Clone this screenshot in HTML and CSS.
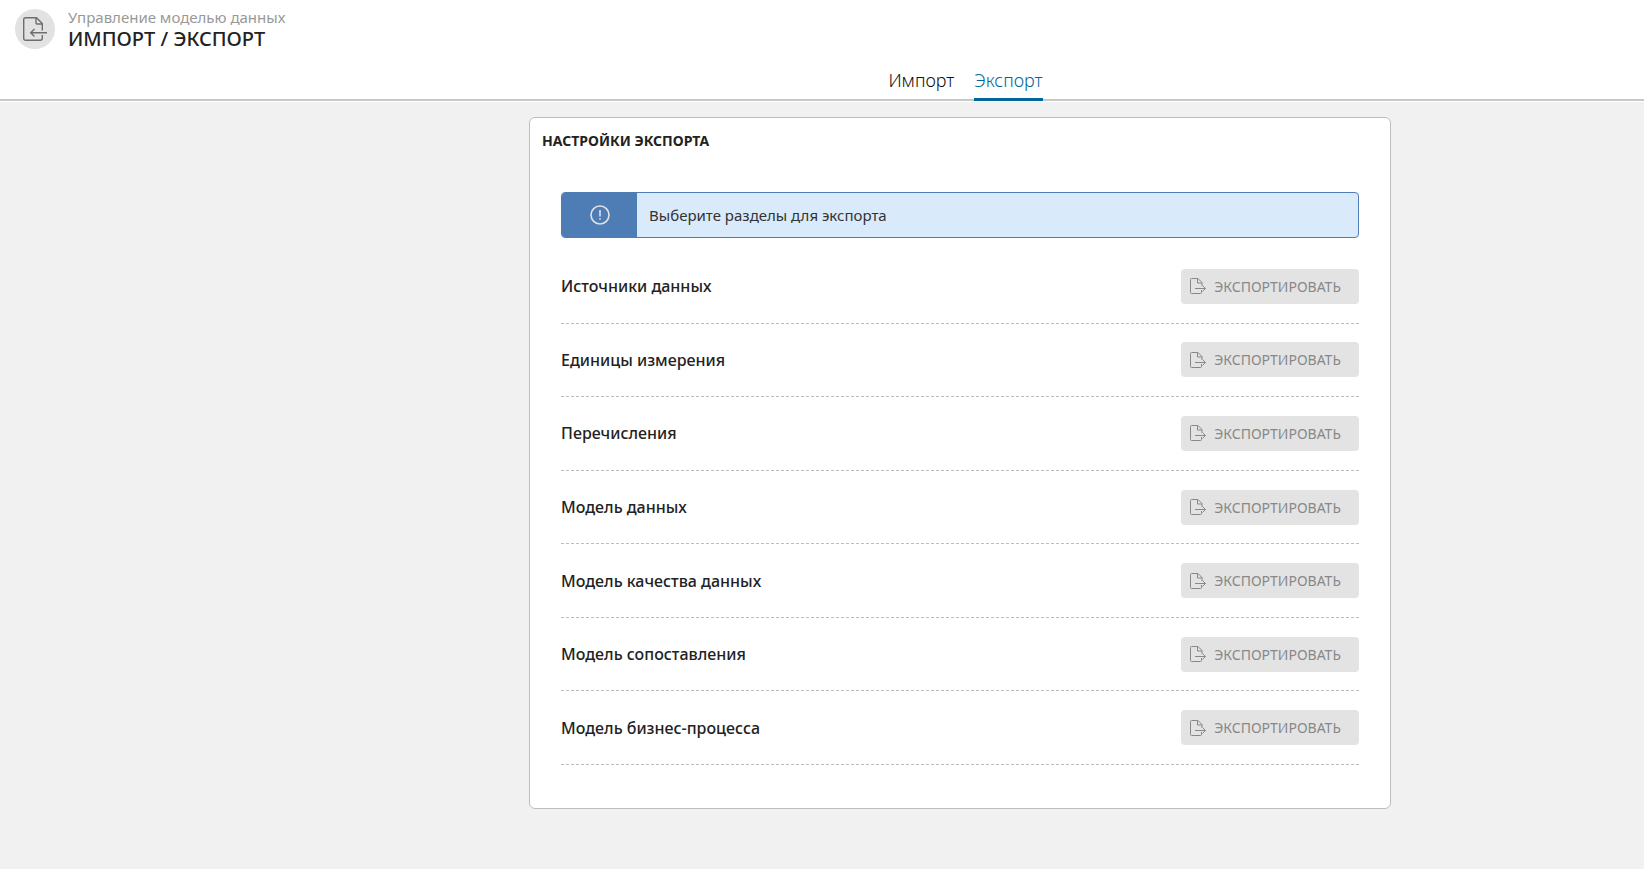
FILE: index.html
```html
<!DOCTYPE html>
<html lang="ru">
<head>
<meta charset="utf-8">
<title>Импорт / Экспорт</title>
<link rel="stylesheet" href="styles.css">
</head>
<body>
<svg class="sprite" aria-hidden="true">
  <symbol id="icon-export" viewBox="0 0 16 16">
    <path d="M11.500 12v2.500q0 1-1 1h-9q-1 0-1-1v-13q0-1 1-1h6.500l4 4V8M7.500.5v4.500h4.500M5 10.500h10.500M12.500 7.500l3 3-3 3"/>
  </symbol>
</svg>
<header class="header">
  <div class="heading">
    <span class="badge">
      <svg class="badge-icon" viewBox="0 0 24 24" aria-hidden="true">
        <path d="M19.300 18v3.300q0 2-2 2H2.700q-2 0-2-2V2.700q0-2 2-2H13.500l5.800 5.800V13.500M13 1v5q0 1 1 1H19.300M24 15.700H7.500M11.500 12L7.700 15.700l3.800 3.700"/>
      </svg>
    </span>
    <div>
      <p class="section">Управление моделью данных</p>
      <h1 class="title">ИМПОРТ / ЭКСПОРТ</h1>
    </div>
  </div>
  <nav class="tabs">
    <a class="tab" href="#import">Импорт</a>
    <a class="tab tab-active" href="#export" aria-current="page">Экспорт</a>
  </nav>
</header>
<main class="content">
  <section class="card">
    <h2 class="card-title">НАСТРОЙКИ ЭКСПОРТА</h2>
    <div class="card-body">
      <div class="notice">
        <span class="notice-mark">
          <svg class="notice-icon" viewBox="0 0 20 20" aria-hidden="true"><circle cx="10" cy="10" r="9"/><path d="M10 5v6.500M10 13.200v1.600"/></svg>
        </span>
        <p class="notice-text">Выберите разделы для экспорта</p>
      </div>
      <ul class="list">
        <li class="row"><span class="name" id="n1">Источники данных</span><button class="button" aria-describedby="n1" disabled><svg class="icon"><use href="#icon-export"/></svg>ЭКСПОРТИРОВАТЬ</button></li>
        <li class="row"><span class="name" id="n2">Единицы измерения</span><button class="button" aria-describedby="n2" disabled><svg class="icon"><use href="#icon-export"/></svg>ЭКСПОРТИРОВАТЬ</button></li>
        <li class="row"><span class="name" id="n3">Перечисления</span><button class="button" aria-describedby="n3" disabled><svg class="icon"><use href="#icon-export"/></svg>ЭКСПОРТИРОВАТЬ</button></li>
        <li class="row"><span class="name" id="n4">Модель данных</span><button class="button" aria-describedby="n4" disabled><svg class="icon"><use href="#icon-export"/></svg>ЭКСПОРТИРОВАТЬ</button></li>
        <li class="row"><span class="name" id="n5">Модель качества данных</span><button class="button" aria-describedby="n5" disabled><svg class="icon"><use href="#icon-export"/></svg>ЭКСПОРТИРОВАТЬ</button></li>
        <li class="row"><span class="name" id="n6">Модель сопоставления</span><button class="button" aria-describedby="n6" disabled><svg class="icon"><use href="#icon-export"/></svg>ЭКСПОРТИРОВАТЬ</button></li>
        <li class="row"><span class="name" id="n7">Модель бизнес-процесса</span><button class="button" aria-describedby="n7" disabled><svg class="icon"><use href="#icon-export"/></svg>ЭКСПОРТИРОВАТЬ</button></li>
      </ul>
    </div>
  </section>
</main>
</body>
</html>
```
FILE: styles.css
```css
* { box-sizing: border-box; }
body {
  margin: 0;
  min-height: 100vh;
  background: #f1f1f1;
  color: #222;
  font-family: "Noto Sans", "Open Sans", sans-serif;
  font-size: 16px;
}
p, h1, h2, ul { margin: 0; padding: 0; }
svg { fill: none; stroke: currentColor; }
.sprite { display: none; }
.header {
  background: #fff;
  border-bottom: 2px solid #c8c8c8;
  box-shadow: 0 1px #fff;
}
.heading {
  display: flex;
  gap: 13px;
  padding: 9px 15px 0;
}
.badge {
  display: flex;
  align-items: center;
  justify-content: center;
  width: 40px;
  height: 40px;
  border-radius: 50%;
  background: #e2e2e2;
  color: #6e6e6e;
}
.badge-icon { width: 24px; height: 24px; stroke-width: 1.4; }
.section { color: #999; font-size: 15px; line-height: 16px; }
.title { font-size: 20px; font-weight: 500; line-height: 28px; }
.tabs {
  display: flex;
  justify-content: center;
  gap: 20px;
  padding-left: 287px;
  margin-top: 14px;
}
.tab {
  height: 34px;
  margin-bottom: -2px;
  color: #111;
  font-size: 18px;
  font-weight: 300;
  line-height: 26px;
  text-decoration: none;
}
.tab-active { color: #00679a; border-bottom: 3px solid #00679a; }
.content { padding: 16px 0 60px 276px; }
.card {
  width: 63%;
  margin: 0 auto;
  padding: 12px 12px 43px;
  background: #fff;
  border: 1px solid #bdbdbd;
  border-radius: 6px;
}
.card-title { font-size: 14px; font-weight: 700; line-height: 22px; }
.card-body { padding: 40px 19px 0; }
.notice {
  display: flex;
  height: 46px;
  overflow: hidden;
  background: #d9eafa;
  border: 1px solid #4e7db6;
  border-radius: 4px;
}
.notice-mark {
  display: flex;
  align-items: center;
  justify-content: center;
  width: 75px;
  background: #4e7db6;
  color: #e2e2e2;
}
.notice-icon { width: 20px; height: 20px; stroke-width: 1.6; }
.notice-text { padding-left: 12px; color: #333; font-size: 15px; line-height: 44px; }
.list {
  display: flex;
  flex-direction: column;
  min-height: 515px;
  margin-top: 12px;
  list-style: none;
}
.row {
  display: flex;
  flex: 1;
  align-items: center;
  justify-content: space-between;
  border-bottom: 1px dashed #bdbdbd;
}
.name { font-weight: 500; }
.button {
  display: flex;
  align-items: center;
  gap: 8px;
  height: 35px;
  padding: 0 18px 0 9px;
  border: 0;
  border-radius: 4px;
  background: #e3e3e3;
  color: #888;
  font-family: inherit;
  font-size: 14px;
}
.icon { width: 16px; height: 16px; }
```
